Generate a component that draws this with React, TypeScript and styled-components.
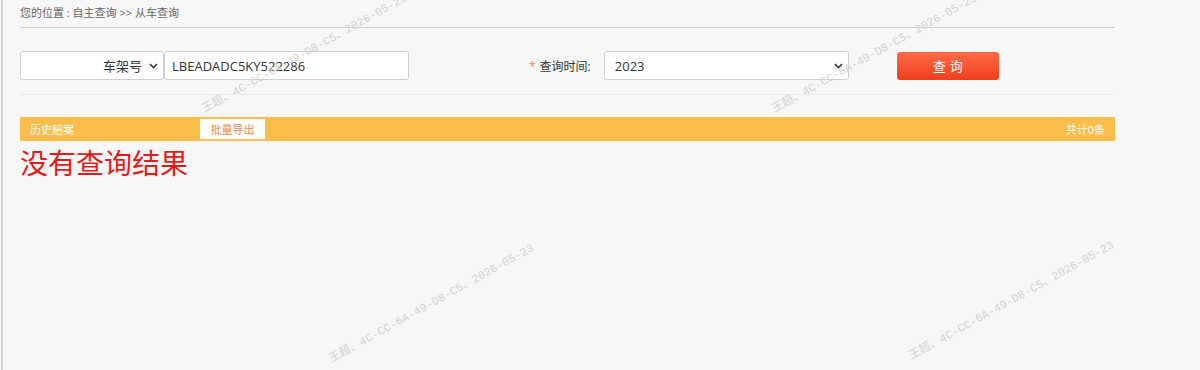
import React from 'react'
import styled, { createGlobalStyle } from 'styled-components'

const GlobalStyle = createGlobalStyle`
  html, body {
    margin: 0;
    padding: 0;
    background: #f7f7f7;
  }
  body {
    font-family: "Open Sans", "Noto Sans CJK SC", sans-serif;
    color: #333;
  }
`

const StyledFrame = styled.div`
  position: relative;
  box-sizing: border-box;
  width: 1200px;
  height: 370px;
  margin-left: 1px;
  border-left: 2px solid #d6d6d6;
  padding-left: 17px;
  overflow: hidden;
`

const StyledContent = styled.div`
  width: 1095px;
`

const StyledBreadcrumb = styled.div`
  font-size: 11px;
  line-height: 16px;
  color: #666;
  padding: 5px 0 6px;
  border-bottom: 1px solid #cfcfcf;
`

const StyledFormRow = styled.div`
  display: flex;
  align-items: center;
  padding: 23px 0 14px;
  border-bottom: 1px solid #ebebeb;
`

const StyledSelect = styled.div<{ width: number; align: 'left' | 'right' }>`
  box-sizing: border-box;
  display: flex;
  align-items: center;
  justify-content: ${props => (props.align === 'right' ? 'flex-end' : 'space-between')};
  gap: 7px;
  width: ${props => props.width}px;
  height: 29px;
  padding: 0 5px 0 10px;
  background: #fff;
  border: 1px solid #cfcfcf;
  border-radius: 3px;
  font-size: 13px;
  color: #333;
`

const StyledInput = styled.div`
  box-sizing: border-box;
  display: flex;
  align-items: center;
  width: 245px;
  height: 29px;
  padding: 0 7px;
  background: #fff;
  border: 1px solid #cfcfcf;
  border-radius: 3px;
  font-size: 13px;
  color: #333;
`

const StyledLabel = styled.label`
  margin-left: 120px;
  margin-right: 13px;
  font-size: 12px;
  color: #333;

  span {
    color: #f08a3c;
    margin-right: 4px;
  }
`

const StyledButton = styled.button`
  width: 102px;
  height: 28px;
  margin-left: 48px;
  border: none;
  border-radius: 3px;
  background: linear-gradient(to bottom, #ff6b47, #ef3f1f);
  color: #fff;
  font-family: inherit;
  font-size: 13px;
  letter-spacing: 4px;
  text-indent: 4px;
`

const StyledResultBar = styled.div`
  display: flex;
  align-items: center;
  height: 24px;
  margin-top: 22px;
  padding: 0 10px;
  background: #fbbd4b;
  color: #fff;
  font-size: 11px;
`

const StyledBarTitle = styled.span`
  width: 170px;
`

const StyledExportButton = styled.button`
  height: 20px;
  width: 65px;
  padding: 0;
  border: none;
  background: #fff;
  color: #e68a45;
  font-family: inherit;
  font-size: 11px;
`

const StyledCount = styled.span`
  margin-left: auto;
`

const StyledEmpty = styled.div`
  font-size: 28px;
  line-height: 44px;
  color: #e31b1b;
`

const StyledWatermark = styled.div`
  position: absolute;
  line-height: 12px;
  font-family: "Liberation Mono", "Noto Sans CJK SC", monospace;
  font-size: 11.5px;
  color: #d2d2d2;
  white-space: nowrap;
  transform-origin: 0 50%;
  transform: rotate(-29deg);
  pointer-events: none;
`

const Chevron = () => (
  <svg width="9" height="6" viewBox="0 0 9 6">
    <path d="M1 1l3.5 3.5L8 1" fill="none" stroke="#333" strokeWidth="1.6" />
  </svg>
)

const watermarks = [
  { x: 203, y: 110 },
  { x: 773, y: 110 },
  { x: 330, y: 360 },
  { x: 910, y: 357 },
]

const App = () => {
  return (
    <>
      <GlobalStyle />
      <StyledFrame>
        <StyledContent>
          <StyledBreadcrumb>您的位置 : 自主查询 &gt;&gt; 从车查询</StyledBreadcrumb>
          <StyledFormRow>
            <StyledSelect width={144} align="right">
              <span>车架号</span>
              <Chevron />
            </StyledSelect>
            <StyledInput>LBEADADC5KY522286</StyledInput>
            <StyledLabel>
              <span>*</span>查询时间:
            </StyledLabel>
            <StyledSelect width={245} align="left">
              <span>2023</span>
              <Chevron />
            </StyledSelect>
            <StyledButton>查询</StyledButton>
          </StyledFormRow>
          <StyledResultBar>
            <StyledBarTitle>历史赔案</StyledBarTitle>
            <StyledExportButton>批量导出</StyledExportButton>
            <StyledCount>共计0条</StyledCount>
          </StyledResultBar>
          <StyledEmpty>没有查询结果</StyledEmpty>
        </StyledContent>
        {watermarks.map((w, i) => (
          <StyledWatermark key={i} style={{ left: w.x - 3, top: w.y - 6 }}>
            王超、4C-CC-6A-49-D8-C5、2026-05-23
          </StyledWatermark>
        ))}
      </StyledFrame>
    </>
  )
}

export default App
